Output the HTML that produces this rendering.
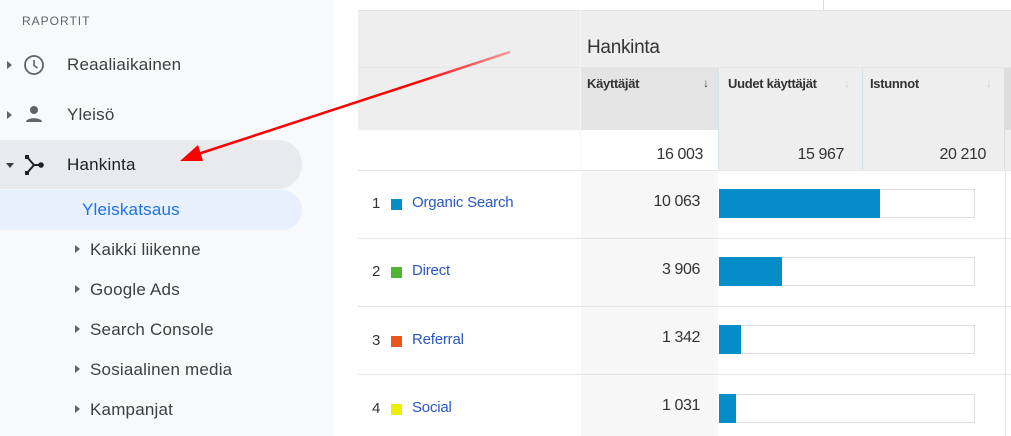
<html><head><style>
body{margin:0;width:1011px;height:436px;position:relative;overflow:hidden;font-family:"Liberation Sans",sans-serif;background:#fff}
.a{position:absolute}
.side{left:0;top:0;width:333px;height:436px;background:#f8f9fa}
.nav{font-size:17px;color:#3c4043;letter-spacing:0.2px}
.sub{font-size:17px;color:#3c4043;letter-spacing:0.2px}
.tri{width:0;height:0;border-top:4px solid transparent;border-bottom:4px solid transparent;border-left:5px solid #5f6368}
.t{font-size:15px;color:#333;letter-spacing:-0.4px}
.lk{font-size:15px;color:#2a56c6;letter-spacing:-0.2px}
.h{font-size:13px;font-weight:bold;color:#333;letter-spacing:-0.3px}
</style></head><body>
<div class="a side"></div>
<div class="a" style="left:22px;top:14px;font-size:12px;letter-spacing:1px;color:#5f6368">RAPORTIT</div>
<div class="a tri" style="left:7px;top:61px"></div>
<svg class="a" style="left:23px;top:54px" width="22" height="22" viewBox="0 0 22 22"><circle cx="11" cy="11" r="9" fill="none" stroke="#5f6368" stroke-width="1.8"/><path d="M11 6v5.5l3.5 2.5" fill="none" stroke="#5f6368" stroke-width="1.6"/></svg>
<div class="a nav" style="left:67px;top:55px">Reaaliaikainen</div>
<div class="a tri" style="left:7px;top:111px"></div>
<svg class="a" style="left:24px;top:104px" width="20" height="20" viewBox="0 0 20 20"><circle cx="10" cy="6" r="4" fill="#5f6368"/><path d="M2 18c0-5 16-5 16 0z" fill="#5f6368"/></svg>
<div class="a nav" style="left:67px;top:105px">Yleisö</div>
<div class="a" style="left:0;top:140px;width:302px;height:49px;background:#e8eaed;border-radius:0 25px 25px 0"></div>
<div class="a" style="left:6px;top:163px;width:0;height:0;border-left:4px solid transparent;border-right:4px solid transparent;border-top:5px solid #3c4043"></div>
<svg class="a" style="left:24px;top:154px" width="22" height="22" viewBox="0 0 22 22"><path d="M3 3l7 8M3 19l7-8h7" stroke="#202124" stroke-width="2" fill="none"/><rect x="1" y="1" width="4" height="4" fill="#202124"/><rect x="1" y="17" width="4" height="4" fill="#202124"/><circle cx="17" cy="11" r="2.8" fill="#202124"/></svg>
<div class="a nav" style="left:67px;top:155px;color:#202124">Hankinta</div>
<div class="a" style="left:0;top:190px;width:302px;height:40px;background:#e8f0fe;border-radius:0 20px 20px 0"></div>
<div class="a" style="left:82px;top:200px;font-size:17px;color:#1a73e8;letter-spacing:0.2px">Yleiskatsaus</div>
<div class="a tri" style="left:75px;top:245px"></div><div class="a sub" style="left:90px;top:240px">Kaikki liikenne</div>
<div class="a tri" style="left:75px;top:285px"></div><div class="a sub" style="left:90px;top:280px">Google Ads</div>
<div class="a tri" style="left:75px;top:325px"></div><div class="a sub" style="left:90px;top:320px">Search Console</div>
<div class="a tri" style="left:75px;top:365px"></div><div class="a sub" style="left:90px;top:360px">Sosiaalinen media</div>
<div class="a tri" style="left:75px;top:405px"></div><div class="a sub" style="left:90px;top:400px">Kampanjat</div>

<div class="a" style="left:823px;top:0;width:1px;height:10px;background:#ddd"></div>
<div class="a" style="left:358px;top:10px;width:653px;height:120px;background:#eee"></div>
<div class="a" style="left:358px;top:10px;width:653px;height:1px;background:#e3e3e3"></div>
<div class="a" style="left:580px;top:10px;width:1px;height:160px;background:#f6f6f6"></div>
<div class="a" style="left:358px;top:67px;width:653px;height:1px;background:#e6e6e6"></div>
<div class="a" style="left:587px;top:37px;font-size:19px;color:#333;letter-spacing:-0.3px">Hankinta</div>
<div class="a" style="left:581px;top:68px;width:137px;height:62px;background:#e4e4e4"></div>
<div class="a" style="left:718px;top:68px;width:1px;height:102px;background:#d5e3e8"></div>
<div class="a" style="left:862px;top:68px;width:1px;height:102px;background:#d5e3e8"></div>
<div class="a" style="left:1004px;top:68px;width:7px;height:62px;background:#ddd"></div>
<div class="a h" style="left:587px;top:76px">Käyttäjät</div><div class="a" style="left:703px;top:76px;font-size:12px;color:#444">↓</div>
<div class="a h" style="left:728px;top:76px">Uudet käyttäjät</div><div class="a" style="left:844px;top:76px;font-size:12px;color:#ccc">↓</div>
<div class="a h" style="left:870px;top:76px">Istunnot</div><div class="a" style="left:986px;top:76px;font-size:12px;color:#ccc">↓</div>
<div class="a" style="left:719px;top:130px;width:292px;height:40px;background:#eee"></div>
<div class="a" style="left:862px;top:130px;width:1px;height:40px;background:#d5e3e8"></div>
<div class="a" style="left:1004px;top:130px;width:1px;height:40px;background:#ddd"></div>
<div class="a t" style="left:580px;width:123px;text-align:right;top:146px;font-size:16px">16 003</div>
<div class="a t" style="left:718px;width:126px;text-align:right;top:146px;font-size:16px">15 967</div>
<div class="a t" style="left:862px;width:124px;text-align:right;top:146px;font-size:16px">20 210</div>
<div class="a" style="left:358px;top:170px;width:653px;height:1px;background:#e6e6e6"></div>
<div class="a" style="left:581px;top:171px;width:137px;height:265px;background:#f7f7f7"></div>
<div class="a" style="left:1005px;top:171px;width:1px;height:265px;background:#e6e6e6"></div>
<div class="a" style="left:358px;top:238px;width:653px;height:1px;background:#e6e6e6"></div>
<div class="a" style="left:358px;top:306px;width:653px;height:1px;background:#e6e6e6"></div>
<div class="a" style="left:358px;top:374px;width:653px;height:1px;background:#e6e6e6"></div>

<div class="a t" style="left:372px;top:195px">1</div><div class="a" style="left:391px;top:199px;width:11px;height:11px;background:#058dc7"></div><div class="a lk" style="left:412px;top:194px">Organic Search</div>
<div class="a t" style="left:580px;width:120px;text-align:right;top:193px;font-size:16px">10 063</div>
<div class="a" style="left:719px;top:189px;width:256px;height:29px;border:1px solid #ddd;box-sizing:border-box"></div><div class="a" style="left:719px;top:189px;width:161px;height:29px;background:#058dc7"></div>

<div class="a t" style="left:372px;top:263px">2</div><div class="a" style="left:391px;top:267px;width:11px;height:11px;background:#50b432"></div><div class="a lk" style="left:412px;top:262px">Direct</div>
<div class="a t" style="left:580px;width:120px;text-align:right;top:261px;font-size:16px">3 906</div>
<div class="a" style="left:719px;top:257px;width:256px;height:29px;border:1px solid #ddd;box-sizing:border-box"></div><div class="a" style="left:719px;top:257px;width:63px;height:29px;background:#058dc7"></div>

<div class="a t" style="left:372px;top:332px">3</div><div class="a" style="left:391px;top:336px;width:11px;height:11px;background:#ed561b"></div><div class="a lk" style="left:412px;top:331px">Referral</div>
<div class="a t" style="left:580px;width:120px;text-align:right;top:329px;font-size:16px">1 342</div>
<div class="a" style="left:719px;top:325px;width:256px;height:29px;border:1px solid #ddd;box-sizing:border-box"></div><div class="a" style="left:719px;top:325px;width:22px;height:29px;background:#058dc7"></div>

<div class="a t" style="left:372px;top:400px">4</div><div class="a" style="left:391px;top:404px;width:11px;height:11px;background:#edef00"></div><div class="a lk" style="left:412px;top:399px">Social</div>
<div class="a t" style="left:580px;width:120px;text-align:right;top:397px;font-size:16px">1 031</div>
<div class="a" style="left:719px;top:394px;width:256px;height:29px;border:1px solid #ddd;box-sizing:border-box"></div><div class="a" style="left:719px;top:394px;width:17px;height:29px;background:#058dc7"></div>

<svg class="a" style="left:0;top:0" width="1011" height="436"><defs><linearGradient id="g" x1="510" y1="52" x2="200" y2="152" gradientUnits="userSpaceOnUse"><stop offset="0" stop-color="#f0a0a0"/><stop offset="0.3" stop-color="#f00"/></linearGradient></defs><line x1="510" y1="52" x2="195" y2="155" stroke="url(#g)" stroke-width="2.5"/><polygon points="180,161 198,145 203,161" fill="#f00"/></svg>
</body></html>
